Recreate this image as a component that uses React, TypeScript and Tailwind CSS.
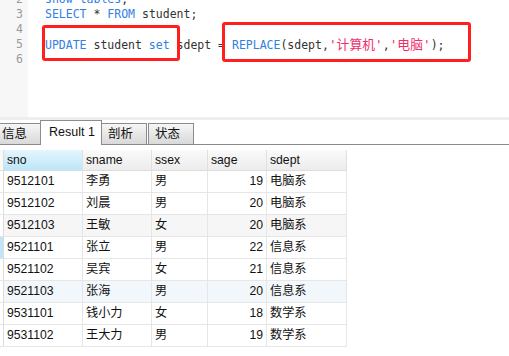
import React from "react";

const mono = { fontFamily: '"DejaVu Sans Mono", "Noto Sans CJK SC", monospace' };
const sans = { fontFamily: '"Liberation Sans", "Noto Sans CJK SC", sans-serif' };

const rows = [
  ["9512101", "李勇", "男", "19", "电脑系"],
  ["9512102", "刘晨", "男", "20", "电脑系"],
  ["9512103", "王敏", "女", "20", "电脑系"],
  ["9521101", "张立", "男", "22", "信息系"],
  ["9521102", "吴宾", "女", "21", "信息系"],
  ["9521103", "张海", "男", "20", "信息系"],
  ["9531101", "钱小力", "女", "18", "数学系"],
  ["9531102", "王大力", "男", "19", "数学系"],
];

function K({ children }: { children: React.ReactNode }) {
  return <span className="text-[#2f80e2]">{children}</span>;
}

function S({ children }: { children: React.ReactNode }) {
  return <span className="text-[12.8px] text-[#ee2f6b]">{children}</span>;
}

function Editor() {
  const lines: React.ReactNode[] = [
    <><K>show</K> <K>tables</K>;</>,
    <><K>SELECT</K> * <K>FROM</K> student;</>,
    <></>,
    <>
      <K>UPDATE</K> student <K>set</K> sdept = <K>REPLACE</K>(sdept,<S>'计算机'</S>,<S>'电脑'</S>);
    </>,
    <></>,
  ];
  return (
    <div className="relative flex h-[117px] overflow-hidden bg-white" style={mono}>
      <div className="w-[28px] shrink-0 bg-[#f7f7f7] pr-[5px] text-right text-[11.5px] text-[#9a9a9a]">
        <div className="-mt-[8px]">
          {[2, 3, 4, 5, 6].map((n) => (
            <div key={n} className="h-[15px] leading-[15px]">
              {n}
            </div>
          ))}
        </div>
      </div>
      <div className="pl-[17px] text-[11.5px] text-[#333]">
        <div className="-mt-[8px]">
          {lines.map((l, i) => (
            <div key={i} className="h-[15px] whitespace-pre leading-[15px]">
              {l}
            </div>
          ))}
        </div>
      </div>
      <div className="absolute left-[42px] top-[25px] h-[36px] w-[138px] rounded-[3px] border-[3px] border-[#ff1f1f]" />
      <div className="absolute left-[222px] top-[22px] h-[40px] w-[249px] rounded-[3px] border-[3px] border-[#ff1f1f]" />
    </div>
  );
}

function Tabs() {
  const inactive =
    "h-[21px] w-[46px] shrink-0 border border-b-0 border-[#8c8c8c] bg-gradient-to-b from-[#f6f6f6] to-[#d9d9d9] px-[6px] text-[12.5px] leading-[20px] text-[#111]";
  return (
    <div className="flex h-[25px] items-end border-b border-[#8a8a8a] bg-white" style={sans}>
      <div className={`${inactive} -ml-[5px]`}>信息</div>
      <div className="-mb-px -ml-px h-[25px] w-[62px] shrink-0 border border-b-0 border-[#8c8c8c] bg-white pl-[8px] text-[12.5px] leading-[22px] text-[#111]">
        Result 1
      </div>
      <div className={`${inactive} -ml-px`}>剖析</div>
      <div className={`${inactive} ml-px`}>状态</div>
    </div>
  );
}

const widths = ["w-[79px]", "w-[69px]", "w-[56px]", "w-[59px]", "w-[80px]"];

function Table() {
  const headers = ["sno", "sname", "ssex", "sage", "sdept"];
  return (
    <div className="pt-[5px] text-[12.2px] text-[#111]" style={sans}>
      <div className="flex h-[21px] w-[347px] border-b border-[#dcdcdc] bg-gradient-to-b from-[#fafafa] to-[#ececec]">
        <div className="w-[4px] shrink-0 border-r border-[#dcdcdc] bg-[#f9f9f9]" />
        {headers.map((h, i) => (
          <div
            key={h}
            className={`${widths[i]} shrink-0 border-r border-[#e0e0e0] px-[3px] leading-[21px] ${
              i === 0 ? "bg-gradient-to-b from-[#e4f6fd] to-[#bde5f8]" : ""
            }`}
          >
            {h}
          </div>
        ))}
      </div>
      {rows.map((r, ri) => (
        <div
          key={r[0]}
          className={`flex h-[22px] w-[347px] border-b border-[#e6e6e6] ${
            ri === 2 ? "bg-[#f6f6f6]" : ri === 5 ? "bg-[#f2f7fc]" : "bg-white"
          }`}
        >
          <div
            className={`w-[4px] shrink-0 border-r border-[#dcdcdc] ${
              ri === 3 ? "bg-[#bfe6f8]" : "bg-white"
            }`}
          />
          {r.map((c, i) => (
            <div
              key={i}
              className={`${widths[i]} shrink-0 border-r border-[#e6e6e6] px-[3px] leading-[21px] ${
                i === 3 ? "text-right" : ""
              }`}
            >
              {c}
            </div>
          ))}
        </div>
      ))}
    </div>
  );
}

export default function App() {
  return (
    <div className="h-[356px] w-[509px] overflow-hidden bg-white">
      <Editor />
      <div className="h-[3px] bg-[#eeeeee]" />
      <Tabs />
      <Table />
    </div>
  );
}
